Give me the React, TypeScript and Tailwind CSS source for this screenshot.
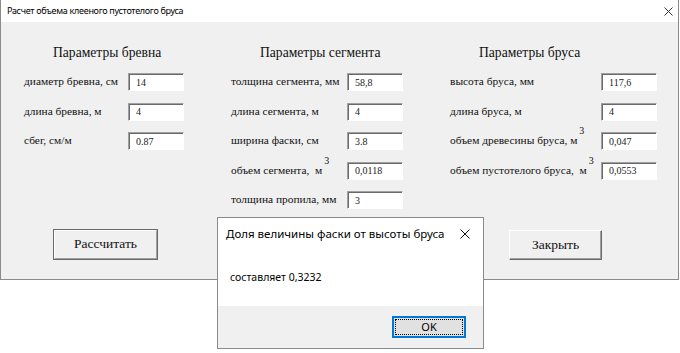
import React from "react";

const serif = "font-['Liberation_Serif','Times_New_Roman',serif]";
const ui = "font-['Noto_Sans','Segoe_UI',sans-serif]";

function Field({ value }: { value: string }) {
  return (
    <div
      className={`w-[56px] h-[18px] bg-white border border-t-[#a0a0a0] border-l-[#a0a0a0] border-b-white border-r-white shadow-[inset_1px_1px_0_#696969] pl-[7px] flex items-center text-[10px] text-[#222] ${serif}`}
    >
      {value}
    </div>
  );
}

function Sup() {
  return <span className="relative -top-[10px] ml-[2px] text-[10px]">3</span>;
}

interface Row {
  label: React.ReactNode;
  value: string;
}

function Column({
  title,
  titlePad,
  width,
  rows,
}: {
  title: string;
  titlePad: string;
  width: string;
  rows: Row[];
}) {
  return (
    <div className={`flex flex-col ${width}`}>
      <div className={`h-[20px] flex items-center text-[13.6px] text-[#111] ${titlePad}`}>{title}</div>
      <div className="mt-[10px] flex flex-col gap-[11.5px]">
        {rows.map((r, i) => (
          <div key={i} className="flex items-center justify-between h-[18px]">
            <span className="text-[11.4px] text-[#111] whitespace-pre">{r.label}</span>
            <Field value={r.value} />
          </div>
        ))}
      </div>
    </div>
  );
}

export default function App() {
  return (
    <div className="relative w-[680px] h-[353px] bg-white overflow-hidden">
      {/* главное окно */}
      <div className="w-[679px] h-[280px] flex flex-col border-l border-r border-b border-[#8a8a8a]">
        <div className="h-[22px] bg-white flex items-center justify-between pl-[6px] pr-[5px]">
          <span className={`text-[9px] tracking-[-0.3px] text-black ${ui}`}>Расчет объема клееного пустотелого бруса</span>
          <svg width="9" height="9" viewBox="0 0 9 9">
            <path d="M0.5 0.5 L8.5 8.5 M8.5 0.5 L0.5 8.5" stroke="#333" strokeWidth="1" />
          </svg>
        </div>
        <div className={`flex-1 bg-[#f0f0f0] relative ${serif}`}>
          <div className="flex pl-[23px] pt-[21px]">
            <Column
              title="Параметры бревна"
              titlePad="pl-[29px]"
              width="w-[160px]"
              rows={[
                { label: "диаметр бревна, см", value: "14" },
                { label: "длина бревна, м", value: "4" },
                { label: "сбег, см/м", value: "0.87" },
              ]}
            />
            <div className="w-[47px]" />
            <Column
              title="Параметры сегмента"
              titlePad="pl-[29px]"
              width="w-[172px]"
              rows={[
                { label: "толщина сегмента, мм", value: "58,8" },
                { label: "длина сегмента, м", value: "4" },
                { label: "ширина фаски, см", value: "3.8" },
                {
                  label: (
                    <>
                      {"объем сегмента,  м"}
                      <Sup />
                    </>
                  ),
                  value: "0,0118",
                },
                { label: "толщина пропила, мм", value: "3" },
              ]}
            />
            <div className="w-[47px]" />
            <Column
              title="Параметры бруса"
              titlePad="pl-[29px]"
              width="w-[207px]"
              rows={[
                { label: "высота бруса, мм", value: "117,6" },
                { label: "длина бруса, м", value: "4" },
                {
                  label: (
                    <>
                      {"объем древесины бруса, м"}
                      <Sup />
                    </>
                  ),
                  value: "0,047",
                },
                {
                  label: (
                    <>
                      {"объем пустотелого бруса,  м"}
                      <Sup />
                    </>
                  ),
                  value: "0,0553",
                },
              ]}
            />
          </div>

          <div className="absolute left-[52px] top-[207px] w-[105px] h-[31px] border border-[#6a6a6a] p-0">
            <div className="w-full h-full border border-t-white border-l-white border-b-[#a0a0a0] border-r-[#a0a0a0] shadow-[1px_1px_0_#696969] flex items-center justify-center text-[13.5px] text-[#111]">
              Рассчитать
            </div>
          </div>

          <div className="absolute left-[508px] top-[208px] w-[93px] h-[30px] border border-t-white border-l-white border-b-[#6a6a6a] border-r-[#6a6a6a] shadow-[inset_-1px_-1px_0_#a0a0a0] flex items-center justify-center text-[13.5px] text-[#111]">
            Закрыть
          </div>
        </div>
      </div>

      {/* окно сообщения */}
      <div className={`absolute left-[217px] top-[217px] w-[267px] h-[132px] bg-white border border-[#8a8a8a] flex flex-col ${ui}`}>
        <div className="h-[29px] flex items-center justify-between pl-[8px] pr-[13px] pt-[3px]">
          <span className="text-[11.5px] text-black">Доля величины фаски от высоты бруса</span>
          <svg width="10" height="10" viewBox="0 0 10 10">
            <path d="M0.5 0.5 L9.5 9.5 M9.5 0.5 L0.5 9.5" stroke="#111" strokeWidth="1" />
          </svg>
        </div>
        <div className="flex-1 bg-white pl-[12px] pt-[23px] text-[10.5px] text-black">составляет 0,3232</div>
        <div className="h-[42px] bg-[#f0f0f0] flex items-center justify-end pr-[17px]">
          <div className="w-[74px] h-[22px] border-2 border-[#0078d7] bg-[#e1e1e1] p-[1px]">
            <div className="w-full h-full border border-dotted border-black flex items-center justify-center text-[11px] text-black">
              OK
            </div>
          </div>
        </div>
      </div>
    </div>
  );
}
